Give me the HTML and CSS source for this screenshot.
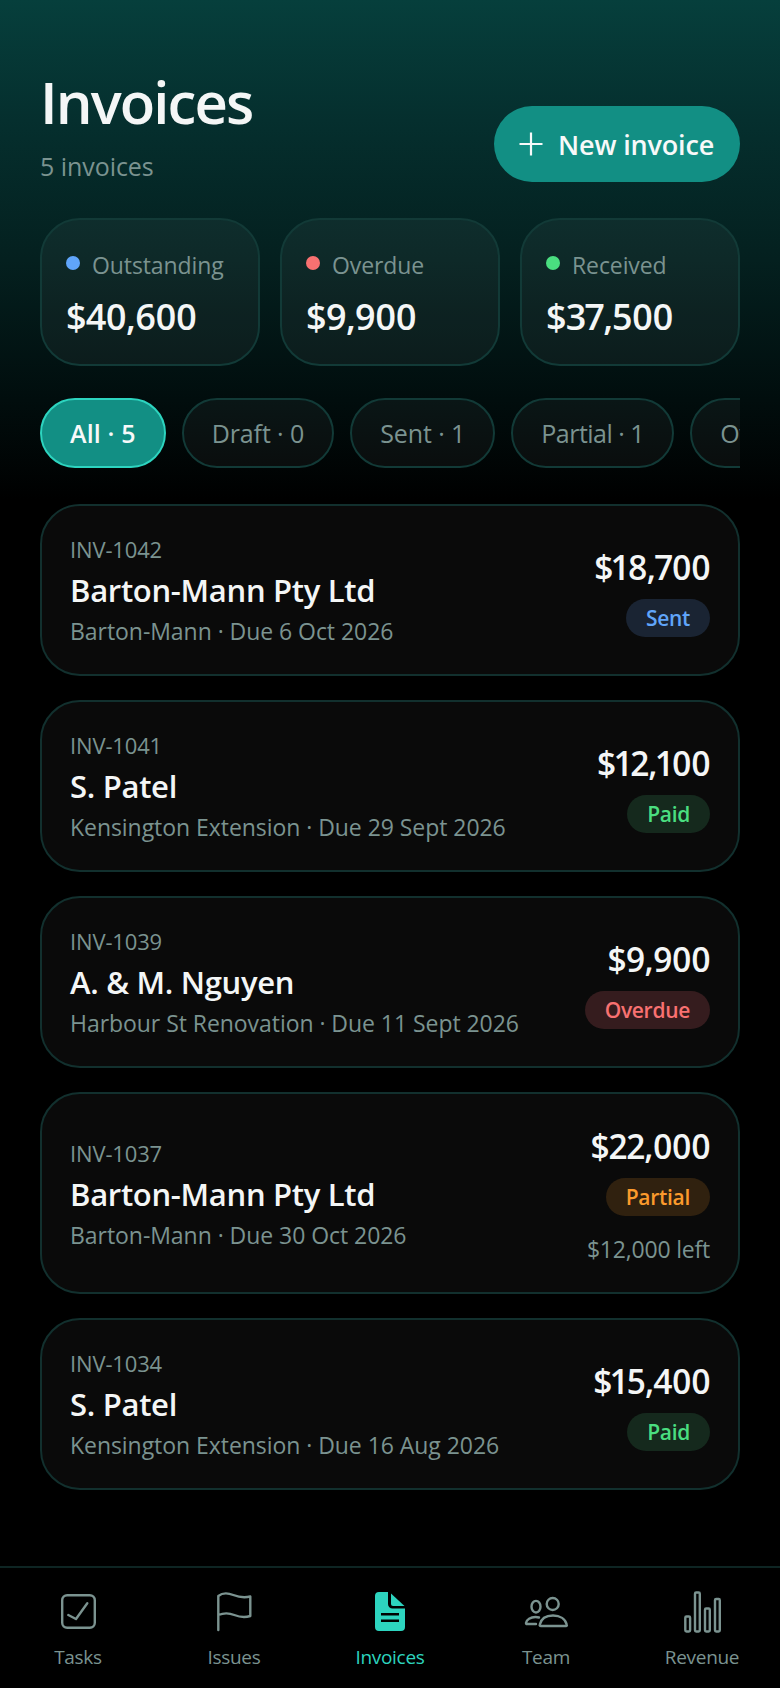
FILE: index.html
```html
<!DOCTYPE html>
<html lang="en">
<head>
<meta charset="utf-8">
<title>Invoices</title>
<link rel="stylesheet" href="styles.css">
</head>
<body>
<div class="app">
  <main class="main">
    <header class="header">
      <div>
        <h1 class="title">Invoices</h1>
        <p class="subtitle">5 invoices</p>
      </div>
      <button class="new-btn">
        <svg class="plus" viewBox="0 0 24 24"><path d="M12 .5v23M.5 12h23"/></svg>
        <span>New invoice</span>
      </button>
    </header>
    <section class="stats">
      <div class="stat"><div class="stat-label"><i class="dot dot-blue"></i>Outstanding</div><div class="stat-value">$40,600</div></div>
      <div class="stat"><div class="stat-label"><i class="dot dot-red"></i>Overdue</div><div class="stat-value">$9,900</div></div>
      <div class="stat"><div class="stat-label"><i class="dot dot-green"></i>Received</div><div class="stat-value">$37,500</div></div>
    </section>
    <nav class="chips">
      <span class="chip chip-active">All · 5</span>
      <span class="chip">Draft · 0</span>
      <span class="chip">Sent · 1</span>
      <span class="chip chip-tight">Partial · 1</span>
      <span class="chip">Overdue · 1</span>
      <span class="chip">Paid · 2</span>
    </nav>
    <section class="list">
      <article class="card">
        <div class="card-left"><div class="inv">INV-1042</div><div class="client">Barton-Mann Pty Ltd</div><div class="meta">Barton-Mann · Due 6 Oct 2026</div></div>
        <div class="card-right"><div class="amount">$18,700</div><span class="badge badge-sent">Sent</span></div>
      </article>
      <article class="card">
        <div class="card-left"><div class="inv">INV-1041</div><div class="client">S. Patel</div><div class="meta">Kensington Extension · Due 29 Sept 2026</div></div>
        <div class="card-right"><div class="amount">$12,100</div><span class="badge badge-paid">Paid</span></div>
      </article>
      <article class="card">
        <div class="card-left"><div class="inv">INV-1039</div><div class="client">A. &amp; M. Nguyen</div><div class="meta">Harbour St Renovation · Due 11 Sept 2026</div></div>
        <div class="card-right"><div class="amount">$9,900</div><span class="badge badge-overdue">Overdue</span></div>
      </article>
      <article class="card card-tall">
        <div class="card-left"><div class="inv">INV-1037</div><div class="client">Barton-Mann Pty Ltd</div><div class="meta">Barton-Mann · Due 30 Oct 2026</div></div>
        <div class="card-right"><div class="amount">$22,000</div><span class="badge badge-partial">Partial</span><div class="left-amt">$12,000 left</div></div>
      </article>
      <article class="card">
        <div class="card-left"><div class="inv">INV-1034</div><div class="client">S. Patel</div><div class="meta">Kensington Extension · Due 16 Aug 2026</div></div>
        <div class="card-right"><div class="amount">$15,400</div><span class="badge badge-paid">Paid</span></div>
      </article>
    </section>
  </main>
  <footer class="tabs">
    <div class="tab">
      <svg class="ico" viewBox="0 0 48 48"><rect x="8.2" y="8.2" width="32.6" height="32.6" rx="5"/><path d="M14.3 28l7.7 4 11.3-15.7"/></svg>
      <span>Tasks</span>
    </div>
    <div class="tab">
      <svg class="ico" viewBox="0 0 48 48"><path d="M8.3 43V9c5-4 10-3 15-1s11 3 17 1.500V29c-6 2-11 1-16-1s-11-2-16 0"/></svg>
      <span>Issues</span>
    </div>
    <div class="tab tab-active">
      <svg class="ico ico-fill" viewBox="0 0 48 48"><path fill-rule="evenodd" d="M13 5h9v12a4.500 4.500 0 0 0 4.500 4.500H39V40a4 4 0 0 1-4 4H13a4 4 0 0 1-4-4V9a4 4 0 0 1 4-4zM15 26v2.500h18V26zM15 32.500V35h18v-2.500z"/><path d="M25 6.500L38.500 19H27a2 2 0 0 1-2-2z"/></svg>
      <span>Invoices</span>
    </div>
    <div class="tab">
      <svg class="ico" viewBox="0 0 48 48"><ellipse cx="14" cy="19.700" rx="4.500" ry="5.800"/><circle cx="30.700" cy="17" r="6"/><path d="M19 39h25c.8 0 1-.5.8-1.200C43.500 32 38 28.500 31 28.500S19 32 17.700 37.800c-.2.7.2 1.200 1.300 1.200z"/><path d="M17 30.500c-1-.3-2-.5-3.500-.5-5 0-9 2.500-9.500 6-.1.700.3 1 1 1h9"/></svg>
      <span>Team</span>
    </div>
    <div class="tab">
      <svg class="ico" viewBox="0 0 48 48"><rect x="7.300" y="29.500" width="4.800" height="15" rx="1.200"/><rect x="17" y="5.500" width="4.800" height="39" rx="1.200"/><rect x="27" y="21.500" width="4.800" height="23" rx="1.200"/><rect x="37" y="12" width="4.800" height="32.500" rx="1.200"/></svg>
      <span>Revenue</span>
    </div>
  </footer>
</div>
</body>
</html>
```

FILE: styles.css
```css
* { box-sizing: border-box; }
html, body { margin: 0; padding: 0; background: #000; }
body { font-family: "Open Sans", "Noto Sans", sans-serif; color: #f4f6f6; }
.app { width: 780px; height: 1688px; display: flex; flex-direction: column; overflow: hidden;
  background: linear-gradient(180deg, #063f3c 0, #052f2e 120px, #04201f 260px, #010d0d 400px, #000 500px); }
.main { flex: 1; padding: 68px 40px 0; min-height: 0; }
.header { display: flex; justify-content: space-between; align-items: flex-end; height: 114px; }
.title { margin: 0; font-size: 58px; line-height: 68px; font-weight: 600; letter-spacing: -1.9px; }
.subtitle { margin: 14px 0 0; font-size: 25px; line-height: 32px; color: #7b9390; letter-spacing: -.05px; }
.new-btn { display: flex; align-items: center; gap: 15px; width: 246px; height: 76px; padding: 0 20px 0 25px; border: 0; border-radius: 38px; background: #128f84; color: #f7f9f9; font: 600 27px "Open Sans", sans-serif; letter-spacing: -.15px; white-space: nowrap; }
.plus { width: 24px; height: 24px; fill: none; stroke: #f7f9f9; stroke-width: 2.2; flex: none; }
.stats { display: grid; grid-template-columns: repeat(3, 1fr); gap: 20px; margin-top: 36px; }
.stat { height: 148px; padding: 30px 24px 0; border: 2px solid #123a37; border-radius: 40px; background: rgba(255,255,255,.045); }
.stat-label { display: flex; align-items: center; gap: 12px; font-size: 23px; line-height: 30px; color: #7b9390; letter-spacing: -.1px; }
.dot { width: 14px; height: 14px; border-radius: 50%; flex: none; margin-top: -4px; }
.dot-blue { background: #60a5fa; }
.dot-red { background: #f87171; }
.dot-green { background: #4ade80; }
.stat-value { margin-top: 14px; font-size: 36px; line-height: 46px; font-weight: 600; letter-spacing: -.9px; font-variant-numeric: proportional-nums; }
.chips { display: flex; gap: 16px; margin-top: 32px; overflow: hidden; }
.chip { flex: none; display: flex; align-items: center; height: 70px; padding: 0 28px; border: 2px solid #123a37; border-radius: 35px; background: rgba(255,255,255,.04); font-size: 25px; color: #7b9390; letter-spacing: -.1px; }
.chip-active { background: #128f84; border-color: #2dd4bf; color: #f7f9f9; font-weight: 600; letter-spacing: .15px; }
.chip-tight { letter-spacing: -.5px; }
.list { display: flex; flex-direction: column; gap: 24px; margin-top: 36px; }
.card { display: flex; justify-content: space-between; align-items: center; padding: 27px 28px; border: 2px solid #12302e; border-radius: 40px; background: #0a0a0a; min-height: 172px; }
.card-tall { padding-top: 28px; padding-bottom: 28px; }
.card-tall .card-left { padding-top: 3px; }
.inv { font-size: 22px; line-height: 30px; color: #7b9390; letter-spacing: -.15px; }
.client { font-size: 31px; line-height: 42px; font-weight: 600; letter-spacing: -.3px; margin-top: 5px; }
.meta { font-size: 23px; line-height: 32px; color: #7b9390; letter-spacing: -.05px; margin-top: 4px; }
.card-right { display: flex; flex-direction: column; align-items: flex-end; padding-top: 2px; }
.amount { font-size: 33.5px; line-height: 44px; font-weight: 600; letter-spacing: -.8px; font-variant-numeric: proportional-nums; }
.badge { display: block; margin-top: 10px; height: 38px; padding: 0 20px; border-radius: 19px; font-size: 21px; line-height: 38px; font-weight: 600; letter-spacing: -.3px; }
.badge-sent { background: #1a2433; color: #60a5fa; }
.badge-paid { background: #15291d; color: #4ade80; }
.badge-overdue { background: #351c1e; color: #f87171; }
.badge-partial { background: #30210f; color: #fb9a2c; }
.left-amt { margin-top: 18px; font-size: 23px; line-height: 30px; color: #7b9390; letter-spacing: -.2px; }
.tabs { flex: none; display: grid; grid-template-columns: repeat(5, 1fr); height: 122px; border-top: 2px solid #0e2523; background: #000; padding-top: 19px; }
.tab { display: flex; flex-direction: column; align-items: center; font-size: 19px; line-height: 26px; color: #7b9390; letter-spacing: -.3px; }
.tab span { margin-top: 9px; }
.tab-active { color: #2dd4bf; }
.ico { width: 48px; height: 48px; fill: none; stroke: #7b9390; stroke-width: 2.400; stroke-linecap: round; stroke-linejoin: round; }
.ico-fill { fill: #2dd4bf; stroke: none; }
```
